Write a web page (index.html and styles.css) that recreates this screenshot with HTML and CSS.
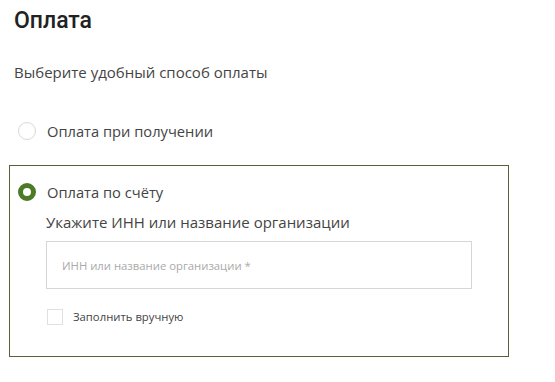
FILE: index.html
```html
<!DOCTYPE html>
<html lang="ru">
<head>
<meta charset="utf-8">
<link rel="stylesheet" href="styles.css">
</head>
<body>
<div class="page">
  <h1 class="title">Оплата</h1>
  <p class="subtitle">Выберите удобный способ оплаты</p>
  <div class="options">
    <div class="option">
      <span class="radio"></span>
      <span class="option-label">Оплата при получении</span>
    </div>
    <div class="option-card">
      <div class="option option--active">
        <span class="radio radio--checked"></span>
        <span class="option-label">Оплата по счёту</span>
      </div>
      <div class="card-body">
        <div class="hint">Укажите ИНН или название организации</div>
        <div class="input">ИНН или название организации *</div>
        <label class="check">
          <span class="checkbox"></span>
          <span class="check-label">Заполнить вручную</span>
        </label>
      </div>
    </div>
  </div>
</div>
</body>
</html>
```

FILE: styles.css
```css
* { box-sizing: border-box; }
html, body { margin: 0; background: #fff; }
body {
  font-family: "Open Sans", "Noto Sans", "Liberation Sans", sans-serif;
  color: #444;
}
.page {
  padding: 8px 0 0 9px;
  width: 509px;
}
.title {
  margin: 0 0 0 5px;
  font-family: Roboto, "Open Sans", sans-serif;
  font-size: 23px;
  line-height: 26px;
  font-weight: 500;
  color: #222;
}
.subtitle {
  margin: 29px 0 0 5px;
  font-size: 15px;
  line-height: 18px;
  color: #444;
}
.options {
  margin-top: 41px;
  display: flex;
  flex-direction: column;
  gap: 25px;
}
.option {
  display: flex;
  align-items: center;
  gap: 11px;
  padding-left: 9px;
  height: 18px;
}
.radio {
  width: 18px;
  height: 18px;
  border-radius: 50%;
  border: 1px solid #d9d9d9;
  flex: none;
  background: #fff;
}
.radio--checked {
  border: 5px solid #4c7a27;
}
.option-label {
  font-size: 14.7px;
  line-height: 18px;
  color: #444;
}
.option-card {
  border: 1px solid #56613a;
  padding: 17px 0 0 0;
  height: 192px;
}
.option-card .option { padding-left: 8px; }
.card-body {
  padding-left: 36px;
  padding-top: 11px;
}
.hint {
  font-size: 15px;
  line-height: 20px;
  color: #444;
}
.input {
  margin-top: 9px;
  width: 426px;
  height: 48px;
  border: 1px solid #d6d6d6;
  display: flex;
  align-items: center;
  padding-left: 15px;
  font-size: 11.3px;
  color: #aaa;
}
.check {
  margin-top: 20px;
  display: flex;
  align-items: center;
  gap: 10px;
  padding-left: 1px;
}
.checkbox {
  width: 16px;
  height: 16px;
  border: 1px solid #e0e0e0;
  flex: none;
}
.check-label {
  font-size: 11.3px;
  line-height: 16px;
  color: #444;
}
```
